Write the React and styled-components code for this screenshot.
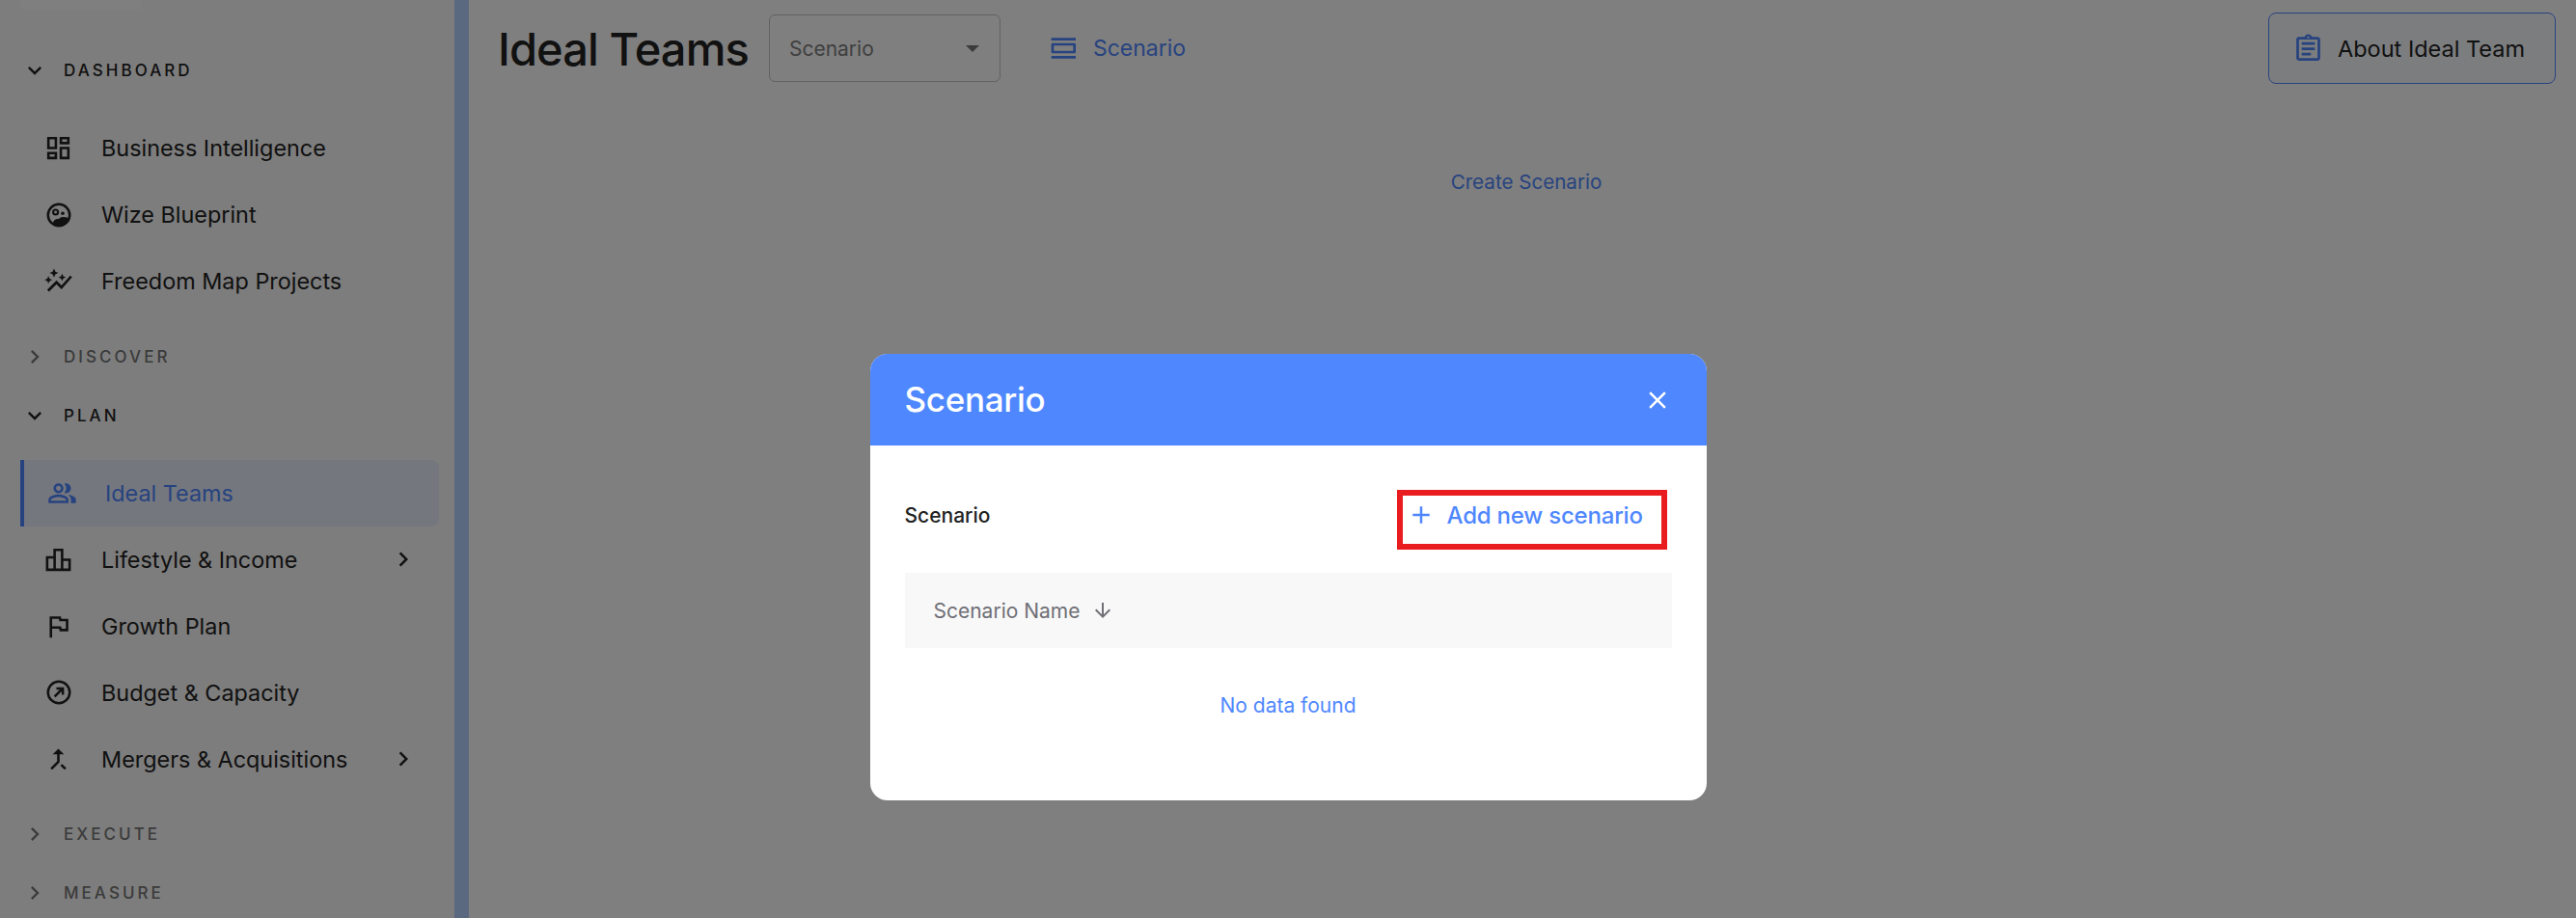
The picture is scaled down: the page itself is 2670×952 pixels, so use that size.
import React from 'react'
import styled, { createGlobalStyle } from 'styled-components'
import {
  MdExpandMore,
  MdChevronRight,
  MdOutlineDashboard,
  MdOutlineAutoGraph,
  MdOutlinePeopleAlt,
  MdOutlineLeaderboard,
  MdOutlineAssistantPhoto,
  MdCallMerge,
  MdOutlineViewDay,
  MdOutlineAssignment,
  MdClose,
  MdAdd,
  MdArrowDownward,
} from 'react-icons/md'

const FONT = `Inter, "Liberation Sans", sans-serif`
const BLUE = '#4f87ff'

const GlobalStyle = createGlobalStyle`
  html, body {
    margin: 0;
    padding: 0;
    background: #fff;
    font-family: ${FONT};
  }
  * { box-sizing: border-box; }
`

const Page = styled.div`
  display: flex;
  height: 100vh;
  overflow: hidden;
`

const Sidebar = styled.aside`
  width: 471px;
  flex-shrink: 0;
  background: #fafafa;
  display: flex;
  flex-direction: column;
  gap: 25px;
`

const LogoStub = styled.div`
  width: 125px;
  height: 10px;
  margin: 0 0 20px 21px;
  background: #fff;
`

const Section = styled.section`
  display: flex;
  flex-direction: column;
`

const SectionHead = styled.div`
  height: 36px;
  display: flex;
  align-items: center;
  padding-left: 22px;
  gap: 16px;
  color: ${(p) => (p.$open ? '#222' : '#777')};

  svg { flex-shrink: 0; }
`

const SectionLabel = styled.span`
  font-size: 17px;
  font-weight: 500;
  letter-spacing: 3.05px;
`

const NavList = styled.div`
  display: flex;
  flex-direction: column;
  margin: 28px 0 0.5px;
`

const NavRow = styled.div`
  height: 69px;
  display: flex;
  align-items: center;
  padding: 0 38px 0 ${(p) => (p.$active ? '24px' : '45px')};
  margin-left: ${(p) => (p.$active ? '21px' : '0')};
  width: ${(p) => (p.$active ? '434px' : '100%')};
  background: ${(p) => (p.$active ? '#eaeeff' : 'transparent')};
  border-left: ${(p) => (p.$active ? `4px solid ${BLUE}` : 'none')};
  border-radius: ${(p) => (p.$active ? '0 8px 8px 0' : '0')};
  color: ${(p) => (p.$active ? BLUE : '#222')};
`

const NavIcon = styled.span`
  width: 31px;
  height: 31px;
  display: flex;
  align-items: center;
  justify-content: center;
  flex-shrink: 0;
  margin-right: 29px;
`

const NavText = styled.span`
  flex: 1;
  font-size: 23.4px;
  font-weight: 400;
  white-space: nowrap;
`

const Strip = styled.div`
  width: 15px;
  flex-shrink: 0;
  background: #b4d2ff;
`

const Main = styled.main`
  flex: 1;
  display: flex;
  flex-direction: column;
  min-width: 0;
`

const Header = styled.header`
  display: flex;
  align-items: center;
  padding: 13px 21px 0 30px;
`

const Title = styled.h1`
  margin: 0 21px 0 0;
  font-size: 47px;
  font-weight: 500;
  letter-spacing: -0.9px;
  color: #222;
  white-space: nowrap;
`

const Select = styled.div`
  width: 240px;
  height: 70px;
  padding: 0 21px 0 20px;
  border: 1px solid #c4c4c4;
  border-radius: 6px;
  display: flex;
  align-items: center;
  justify-content: space-between;
  font-size: 21px;
  color: #808080;
`

const Caret = styled.span`
  width: 0;
  height: 0;
  border-left: 7px solid transparent;
  border-right: 7px solid transparent;
  border-top: 7px solid #777;
`

const ScenarioLink = styled.a`
  margin-left: 50px;
  display: flex;
  align-items: center;
  gap: 14px;
  font-size: 23px;
  color: ${BLUE};
`

const AboutButton = styled.button`
  margin-left: auto;
  width: 298px;
  height: 74px;
  padding: 0 0 0 24px;
  display: flex;
  align-items: center;
  gap: 14px;
  background: #f8faff;
  border: 1px solid ${BLUE};
  border-radius: 8px;
  font-family: ${FONT};
  font-size: 23.5px;
  color: #222;
  white-space: nowrap;
`

const Body = styled.div`
  margin-top: 87px;
  padding-left: 8px;
  display: flex;
  justify-content: center;
`

const CreateLink = styled.a`
  font-size: 20.6px;
  line-height: 30px;
  color: ${BLUE};
`

const Overlay = styled.div`
  position: fixed;
  inset: 0;
  padding-top: 367px;
  background: rgba(0, 0, 0, 0.5);
  display: flex;
  justify-content: center;
  align-items: flex-start;
`

const Modal = styled.div`
  width: 867px;
  height: 463px;
  background: #fff;
  border-radius: 18px;
  overflow: hidden;
`

const ModalHeader = styled.div`
  height: 95px;
  padding: 0 36px;
  background: ${BLUE};
  color: #fff;
  display: flex;
  align-items: center;
  justify-content: space-between;
`

const ModalTitle = styled.h2`
  margin: 0 0 2px;
  font-size: 35px;
  font-weight: 500;
  letter-spacing: -0.3px;
`

const ModalBody = styled.div`
  padding: 46px 36px 0;
`

const ScenarioRow = styled.div`
  display: flex;
  align-items: center;
  justify-content: space-between;
  padding-right: 5px;
`

const RowLabel = styled.span`
  padding-bottom: 10px;
  font-size: 21px;
  font-weight: 500;
  color: #222;
`

const AddButton = styled.button`
  width: 280px;
  height: 62px;
  padding: 0 0 10px 4px;
  display: flex;
  align-items: center;
  gap: 12px;
  background: #fff;
  border: 6px solid #e91c1f;
  font-family: ${FONT};
  font-size: 24px;
  font-weight: 500;
  letter-spacing: -0.2px;
  color: ${BLUE};
  white-space: nowrap;
`

const TableHead = styled.div`
  margin-top: 24px;
  height: 78px;
  padding-left: 30px;
  background: #f8f8f8;
  display: flex;
  align-items: center;
  gap: 12px;
  font-size: 21px;
  color: #6f6f76;
`

const EmptyNote = styled.div`
  margin-top: 45px;
  text-align: center;
  font-size: 21px;
  line-height: 30px;
  color: ${BLUE};
`

const WizeIcon = () => (
  <svg width="30" height="30" viewBox="0 0 24 24" fill="none">
    <circle cx="12" cy="12" r="9" stroke="#222" strokeWidth="2" />
    <circle cx="9.3" cy="9.6" r="2" stroke="#222" strokeWidth="1.7" />
    <circle cx="15.2" cy="10.6" r="1.4" fill="#222" />
    <path d="M7 18.5c1-2.6 2.6-3.6 5-3.2 1-2 4-2.2 8-1 -.5 3.5-3.4 6.7-8 6.7-2 0-3.6-.8-5-2.5z" fill="#222" />
  </svg>
)

const GaugeIcon = () => (
  <svg width="30" height="30" viewBox="0 0 24 24" fill="none" stroke="#222" strokeWidth="2">
    <circle cx="12" cy="12" r="9" />
    <path d="M8.5 15.5 15 9M10 8.7h5.3V14" />
  </svg>
)

const planItems = [
  { label: 'Ideal Teams', icon: <MdOutlinePeopleAlt size={31} />, active: true },
  { label: 'Lifestyle & Income', icon: <MdOutlineLeaderboard size={31} />, more: true },
  { label: 'Growth Plan', icon: <MdOutlineAssistantPhoto size={31} /> },
  { label: 'Budget & Capacity', icon: <GaugeIcon /> },
  { label: 'Mergers & Acquisitions', icon: <MdCallMerge size={31} />, more: true },
]

const dashboardItems = [
  { label: 'Business Intelligence', icon: <MdOutlineDashboard size={31} /> },
  { label: 'Wize Blueprint', icon: <WizeIcon /> },
  { label: 'Freedom Map Projects', icon: <MdOutlineAutoGraph size={31} /> },
]

const NavSection = ({ title, items }) => (
  <Section>
    <SectionHead $open={!!items}>
      {items ? <MdExpandMore size={28} /> : <MdChevronRight size={28} />}
      <SectionLabel>{title}</SectionLabel>
    </SectionHead>
    {items && (
      <NavList>
        {items.map((item) => (
          <NavRow key={item.label} $active={item.active}>
            <NavIcon>{item.icon}</NavIcon>
            <NavText>{item.label}</NavText>
            {item.more && <MdChevronRight size={30} />}
          </NavRow>
        ))}
      </NavList>
    )}
  </Section>
)

export default function App() {
  return (
    <>
      <GlobalStyle />
      <Page>
        <Sidebar>
          <LogoStub />
          <NavSection title="DASHBOARD" items={dashboardItems} />
          <NavSection title="DISCOVER" />
          <NavSection title="PLAN" items={planItems} />
          <NavSection title="EXECUTE" />
          <NavSection title="MEASURE" />
        </Sidebar>
        <Strip />
        <Main>
          <Header>
            <Title>Ideal Teams</Title>
            <Select>
              Scenario
              <Caret />
            </Select>
            <ScenarioLink>
              <MdOutlineViewDay size={32} />
              Scenario
            </ScenarioLink>
            <AboutButton>
              <MdOutlineAssignment size={33} color={BLUE} />
              About Ideal Team
            </AboutButton>
          </Header>
          <Body>
            <CreateLink>Create Scenario</CreateLink>
          </Body>
        </Main>
      </Page>
      <Overlay>
        <Modal>
          <ModalHeader>
            <ModalTitle>Scenario</ModalTitle>
            <MdClose size={30} />
          </ModalHeader>
          <ModalBody>
            <ScenarioRow>
              <RowLabel>Scenario</RowLabel>
              <AddButton>
                <MdAdd size={30} />
                Add new scenario
              </AddButton>
            </ScenarioRow>
            <TableHead>
              Scenario Name
              <MdArrowDownward size={24} />
            </TableHead>
            <EmptyNote>No data found</EmptyNote>
          </ModalBody>
        </Modal>
      </Overlay>
    </>
  )
}
